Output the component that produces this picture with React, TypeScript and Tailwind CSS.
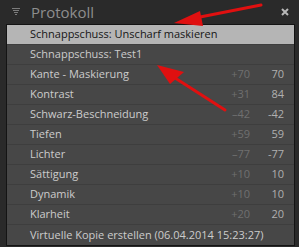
import React from "react";

const rows: { label: string; a?: string; b?: string }[] = [
  { label: "Schnappschuss: Unscharf maskieren" },
  { label: "Schnappschuss: Test1" },
  { label: "Kante - Maskierung", a: "+70", b: "70" },
  { label: "Kontrast", a: "+31", b: "84" },
  { label: "Schwarz-Beschneidung", a: "-42", b: "-42" },
  { label: "Tiefen", a: "+59", b: "59" },
  { label: "Lichter", a: "-77", b: "-77" },
  { label: "Sättigung", a: "+10", b: "10" },
  { label: "Dynamik", a: "+10", b: "10" },
  { label: "Klarheit", a: "+20", b: "20" },
  { label: "Virtuelle Kopie erstellen (06.04.2014 15:23:27)" },
];

function DotTriangle() {
  const dots: [number, number][] = [];
  const rowsDots = [4, 3, 2, 1];
  rowsDots.forEach((n, r) => {
    for (let i = 0; i < n; i++) dots.push([r + i * 2, r * 2]);
  });
  return (
    <svg width="9" height="8" viewBox="0 0 9 8" className="shrink-0">
      {dots.map(([x, y], i) => (
        <rect key={i} x={x + 0.5} y={y} width="1" height="1" fill="#cfcfcf" />
      ))}
    </svg>
  );
}

export default function App() {
  return (
    <div
      className="relative w-[299px] h-[247px] bg-[#2a2a2a] overflow-hidden"
      style={{ fontFamily: '"Open Sans", "Noto Sans", sans-serif' }}
    >
      <div className="h-[24px] flex items-center pl-[12px] pr-[10px]">
        <DotTriangle />
        <span className="ml-[10px] text-[15px] text-[#8e8e8e] leading-none">Protokoll</span>
        <span className="ml-auto">
          <svg width="8" height="8" viewBox="0 0 8 8">
            <path d="M1 1 L7 7 M7 1 L1 7" stroke="#b8b8b8" strokeWidth="2" />
          </svg>
        </span>
      </div>
      <div className="ml-[6px] w-[289px] border border-[#141414] bg-[#474747]">
        {rows.map((r, i) => (
          <div
            key={i}
            className={
              "h-[20px] flex items-center pr-[10px] text-[11px] border-b border-[#3e3e3e] last:border-b-0 " +
              (i === 0 ? "bg-[#b5b5b5] text-[#161616]" : "text-[#cccccc]")
            }
          >
            <span className="w-[23px] shrink-0" />
            <span className="whitespace-nowrap">{r.label}</span>
            {r.a && (
              <>
                <span className="ml-auto w-[40px] text-right text-[11px] text-[#707070]">
                  {r.a.replace("-", "–")}
                </span>
                <span className="w-[34px] text-right text-[11px] text-[#b0b0b0]">{r.b}</span>
              </>
            )}
          </div>
        ))}
      </div>
      <svg className="absolute left-0 top-0" width="299" height="247" viewBox="0 0 299 247">
        <line x1="261" y1="5" x2="195" y2="18" stroke="#e01010" strokeWidth="3" strokeLinecap="round" />
        <polygon points="174,23 200,11 203,26" fill="#e01010" />
        <line x1="225" y1="110" x2="172" y2="76" stroke="#e01010" strokeWidth="3" strokeLinecap="round" />
        <polygon points="157,65 184,72 170,84" fill="#e01010" />
      </svg>
    </div>
  );
}
